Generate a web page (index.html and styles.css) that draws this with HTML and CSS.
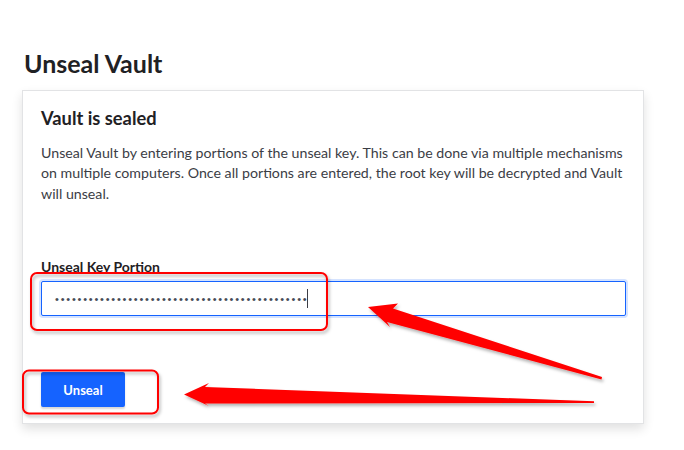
FILE: index.html
```html
<!DOCTYPE html>
<html lang="en">
<head>
<meta charset="utf-8">
<title>Unseal Vault</title>
<link rel="stylesheet" href="styles.css">
</head>
<body>
<main class="page">
  <h1 class="title">Unseal Vault</h1>
  <section class="card">
    <h2 class="card-title">Vault is sealed</h2>
    <p class="card-text">Unseal Vault by entering portions of the unseal key. This can be done via multiple mechanisms on multiple computers. Once all portions are entered, the root key will be decrypted and Vault will unseal.</p>
    <label class="field-label" for="key">Unseal Key Portion</label>
    <div class="field" id="key" role="textbox" aria-label="Unseal Key Portion"><span class="dots">•••••••••••••••••••••••••••••••••••••••••••••</span><span class="caret"></span></div>
    <div class="actions">
      <button class="btn" type="button">Unseal</button>
    </div>
  </section>
</main>
<svg class="annotations" width="684" height="450" viewBox="0 0 684 450" aria-hidden="true">
  <defs>
    <filter id="shadow" x="-10%" y="-30%" width="120%" height="160%">
      <feDropShadow dx="1.5" dy="2.5" stdDeviation="1.8" flood-color="#000" flood-opacity="0.3"/>
    </filter>
  </defs>
  <g filter="url(#shadow)">
    <rect x="31" y="273" width="296" height="57" rx="6" ry="6" fill="none" stroke="#ff0000" stroke-width="2"/>
    <rect x="23" y="370.5" width="135" height="43" rx="6" ry="6" fill="none" stroke="#ff0000" stroke-width="2"/>
    <polygon fill="#ff0000" points="368,307 398,303.5 393,308.5 602,377 601.5,379.5 387,322 390,327"/>
    <polygon fill="#ff0000" points="184,394.5 209,383 205,387 594,401.3 594,403 205,403.5 209,406"/>
  </g>
</svg>
</body>
</html>
```

FILE: styles.css
```css
html, body {
  margin: 0;
  padding: 0;
  background: #ffffff;
}

body {
  position: relative;
  width: 684px;
  height: 450px;
  overflow: hidden;
  font-family: Lato, "Liberation Sans", sans-serif;
  color: #1f2124;
}

.page {
  display: flex;
  flex-direction: column;
  padding: 48px 0 0 22px;
}

.title {
  margin: 0 0 12px 2px;
  font-size: 25px;
  line-height: 30px;
  font-weight: 700;
  color: #1f2124;
}

.card {
  box-sizing: border-box;
  width: 622px;
  display: flex;
  flex-direction: column;
  align-items: flex-start;
  padding: 15px 17px 16px 18px;
  border: 1px solid #e2e3e5;
  background: #ffffff;
  box-shadow: 0 5px 10px rgba(0, 0, 0, 0.12);
}

.card-title {
  margin: 0;
  font-size: 18.3px;
  line-height: 24px;
  font-weight: 700;
  color: #1f2124;
}

.card-text {
  margin: 12.6px 0 0 0;
  font-size: 14.2px;
  line-height: 20.5px;
  color: #3b3d45;
}

.field-label {
  margin-top: 54px;
  font-size: 14px;
  line-height: 17px;
  font-weight: 700;
  color: #1f2124;
}

.field {
  box-sizing: border-box;
  margin-top: 6.3px;
  width: 585px;
  height: 35px;
  display: flex;
  align-items: center;
  padding: 0 13px;
  border: 1px solid #1563ff;
  border-radius: 2px;
  box-shadow: 0 0 0 2px rgba(21, 99, 255, 0.18);
  background: #ffffff;
}

.dots {
  font-family: "Liberation Sans", sans-serif;
  font-size: 11px;
  line-height: 12px;
  letter-spacing: 1.78px;
  color: #464b57;
  margin-right: -2px;
}

.caret {
  display: block;
  width: 1px;
  height: 19px;
  margin-left: 1px;
  background: #3b3d45;
}

.actions {
  margin-top: 56px;
  display: flex;
}

.btn {
  width: 84px;
  height: 35px;
  border: none;
  border-radius: 2px;
  background: #1563ff;
  color: #ffffff;
  font-family: Lato, "Liberation Sans", sans-serif;
  font-size: 13px;
  font-weight: 700;
  box-shadow: 0 2px 2px rgba(0, 0, 0, 0.16);
  padding: 0;
}

.annotations {
  position: absolute;
  top: 0;
  left: 0;
  pointer-events: none;
}
```
